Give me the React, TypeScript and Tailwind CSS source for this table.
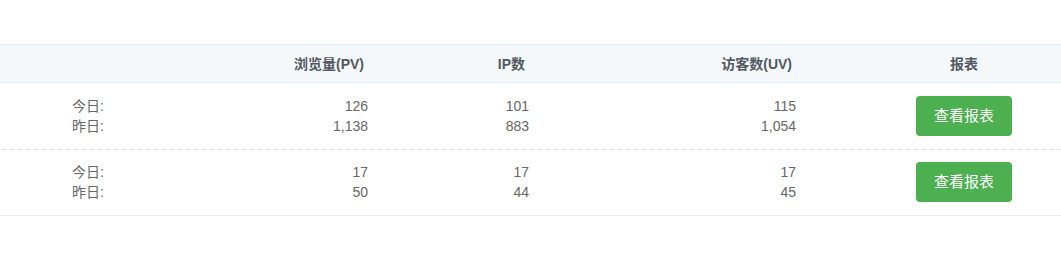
import React from "react";

interface StatRow {
  pv: [string, string];
  ip: [string, string];
  uv: [string, string];
}

const rows: StatRow[] = [
  { pv: ["126", "1,138"], ip: ["101", "883"], uv: ["115", "1,054"] },
  { pv: ["17", "50"], ip: ["17", "44"], uv: ["17", "45"] },
];

const gridCols = "grid grid-cols-[114px_264px_161px_267px_1fr]";

const Pair = ({ values }: { values: [string, string] }) => (
  <div className="flex flex-col items-end pr-[10px] text-sm leading-5">
    <span>{values[0]}</span>
    <span>{values[1]}</span>
  </div>
);

const App = () => {
  return (
    <div
      className="w-full h-[268px] bg-white pt-[44px]"
      style={{ fontFamily: '"Liberation Sans", Arial, "Noto Sans CJK SC", sans-serif' }}
    >
      {/* header */}
      <div
        className={`${gridCols} h-[39px] items-center bg-[#f5f8fa] border-y border-[#e9ecef] text-sm font-bold text-[#515961]`}
      >
        <div />
        <div className="text-right pr-[14px]">浏览量(PV)</div>
        <div className="text-right pr-[14px]">IP数</div>
        <div className="text-right pr-[14px]">访客数(UV)</div>
        <div className="text-center pl-[61px]">报表</div>
      </div>

      {rows.map((row, i) => (
        <div
          key={i}
          className={`${gridCols} items-center text-[#666] ${
            i === 0
              ? "py-[13px] border-b border-dotted border-[#ddd]"
              : "pt-[12px] pb-[13px] border-b border-[#eceeef]"
          }`}
        >
          <div className="flex flex-col items-end pr-[10px] text-sm leading-5">
            <span>今日:</span>
            <span>昨日:</span>
          </div>
          <Pair values={row.pv} />
          <Pair values={row.ip} />
          <Pair values={row.uv} />
          <div className="flex justify-center pl-[61px]">
            <button className="w-[96px] h-[40px] rounded-[4px] bg-[#4caf50] text-white text-[15px]">
              查看报表
            </button>
          </div>
        </div>
      ))}
    </div>
  );
};

export default App;
